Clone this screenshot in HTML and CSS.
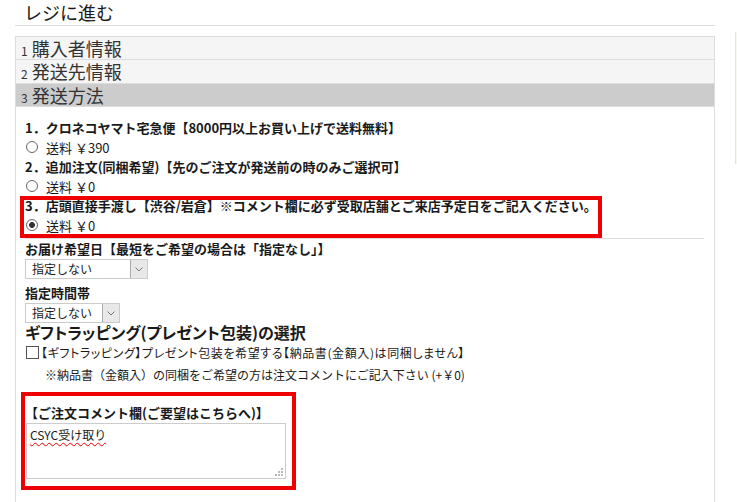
FILE: index.html
```html
<!DOCTYPE html>
<html lang="ja">
  <head>
    <meta charset="UTF-8" />
    <meta name="viewport" content="width=device-width, initial-scale=1.0" />
    <title>レジに進む</title>
    <link rel="stylesheet" href="styles.css">
  </head>
  <body>
    <div class="page">
      <div class="main">
        <h1 class="title">レジに進む</h1>
        <ol class="steps">
          <li class="step"><span class="num">1</span>購入者情報</li>
          <li class="step"><span class="num">2</span>発送先情報</li>
          <li class="step current"><span class="num">3</span>発送方法</li>
        </ol>
        <div class="panel">
          <div class="options">
            <div class="option">
              <div class="option-title">1．クロネコヤマト宅急便【8000円以上お買い上げで送料無料】</div>
              <div class="radio-line"><span class="radio"></span>送料 ￥390</div>
            </div>
            <div class="option">
              <div class="option-title">2．追加注文(同梱希望)【先のご注文が発送前の時のみご選択可】</div>
              <div class="radio-line"><span class="radio"></span>送料 ￥0</div>
            </div>
            <div class="option marked">
              <div class="option-title">3．店頭直接手渡し【渋谷/岩倉】※コメント欄に必ず受取店舗とご来店予定日をご記入ください。</div>
              <div class="radio-line"><span class="radio checked"></span>送料 ￥0</div>
            </div>
          </div>

          <div class="field-label">お届け希望日【最短をご希望の場合は「指定なし」】</div>
          <div class="select wide">
            <span class="select-value">指定しない</span>
            <span class="select-arrow">
              <svg width="8" height="5" viewBox="0 0 8 5"><path d="M0.5 0.5 L4 4 L7.5 0.5" fill="none" stroke="#777" stroke-width="1"/></svg>
            </span>
          </div>

          <div class="field-label time">指定時間帯</div>
          <div class="select narrow">
            <span class="select-value">指定しない</span>
            <span class="select-arrow">
              <svg width="8" height="5" viewBox="0 0 8 5"><path d="M0.5 0.5 L4 4 L7.5 0.5" fill="none" stroke="#777" stroke-width="1"/></svg>
            </span>
          </div>

          <div class="gift-heading">ギフトラッピング(プレゼント包装)の選択</div>
          <div class="gift-check"><span class="checkbox"></span>【ギフトラッピング】プレゼント包装を希望する【納品書(金額入)は同梱しません】</div>
          <div class="note">※納品書（金額入）の同梱をご希望の方は注文コメントにご記入下さい (+￥0)</div>

          <div class="comment">
            <div class="comment-label">【ご注文コメント欄(ご要望はこちらへ)】</div>
            <div class="textarea">
              <span class="typo">CSYC受け取り</span>
              <svg class="grip" width="8" height="8" viewBox="0 0 8 8">
                <rect x="6" y="0" width="2" height="2" fill="#bbb"/>
                <rect x="3" y="3" width="2" height="2" fill="#bbb"/>
                <rect x="6" y="3" width="2" height="2" fill="#bbb"/>
                <rect x="0" y="6" width="2" height="2" fill="#bbb"/>
                <rect x="3" y="6" width="2" height="2" fill="#bbb"/>
                <rect x="6" y="6" width="2" height="2" fill="#bbb"/>
              </svg>
            </div>
          </div>
        </div>
      </div>
      <div class="side"></div>
    </div>
  </body>
</html>
```

FILE: styles.css
```css
body {
  margin: 0;
  font-family: "Noto Sans CJK JP", "Liberation Sans", sans-serif;
  color: #1a1a1a;
  background-color: #fff;
  overflow: hidden;
}
.page {
  display: flex;
  padding-left: 15px;
}
.main {
  width: 700px;
  flex: none;
}
.title {
  margin: 0;
  height: 25px;
  padding-left: 9px;
  border-bottom: 1px solid #ddd;
  font-size: 18px;
  font-weight: normal;
  line-height: 25px;
}
.steps {
  list-style: none;
  margin: 10px 0 0;
  padding: 0;
  border: 1px solid #ddd;
  border-bottom: none;
}
.step {
  height: 22px;
  padding-left: 5px;
  border-bottom: 1px solid #ddd;
  background-color: #f5f5f5;
  color: #333;
  font-size: 18px;
  line-height: 22px;
}
.step:nth-child(2) {
  height: 23px;
  line-height: 23px;
}
.step.current {
  background-color: #ccc;
}
.num {
  font-size: 12px;
  margin-right: 4px;
}
.panel {
  height: 400px;
  padding: 11px 10px 0 9px;
  border-left: 1px solid #ddd;
  border-right: 1px solid #ddd;
}
.options {
  padding-bottom: 3px;
  border-bottom: 1px solid #ddd;
}
.option-title {
  font-size: 13px;
  font-weight: bold;
  line-height: 19px;
}
.radio-line {
  display: flex;
  align-items: center;
  gap: 8px;
  height: 20px;
  padding-left: 1px;
  font-size: 13px;
}
.radio {
  width: 12px;
  height: 12px;
  border: 1px solid #666;
  border-radius: 50%;
  box-sizing: border-box;
  background-color: #fff;
}
.radio.checked {
  background: radial-gradient(circle, #333 0 2.6px, #fff 3.2px);
}
.option.marked {
  position: relative;
}
.option.marked::after {
  content: "";
  position: absolute;
  top: 0;
  left: -5px;
  width: 582px;
  height: 42px;
  border: 4px solid #e00;
  box-sizing: border-box;
}
.field-label {
  font-size: 13px;
  font-weight: bold;
  line-height: 20px;
}
.field-label.time {
  margin-top: 4px;
}
.select {
  display: flex;
  height: 20px;
  border: 1px solid #ccc;
  box-sizing: border-box;
  font-size: 12px;
  line-height: 18px;
}
.select.wide {
  width: 123px;
}
.select.narrow {
  width: 95px;
}
.select-value {
  padding-left: 6px;
}
.select-arrow {
  display: flex;
  align-items: center;
  justify-content: center;
  margin-left: auto;
  width: 16px;
  border-left: 1px solid #aaa;
  background-color: #e8e8e8;
}
.gift-heading {
  font-size: 16px;
  font-weight: bold;
  line-height: 19px;
  font-feature-settings: "palt";
}
.gift-check {
  display: flex;
  align-items: center;
  height: 20px;
  padding-left: 1px;
  font-size: 12px;
  letter-spacing: 0.6px;
  font-feature-settings: "palt";
}
.checkbox {
  width: 13px;
  height: 13px;
  margin-right: 2px;
  border: 1px solid #555;
  box-sizing: border-box;
}
.note {
  margin-top: 3px;
  padding-left: 20px;
  font-size: 12px;
  line-height: 20px;
}
.comment {
  width: 267px;
  margin-top: 11px;
  padding: 7px 0 7px 1px;
  box-sizing: border-box;
  outline: 4px solid #e00;
}
.comment-label {
  margin-left: -1px;
  font-size: 13px;
  font-weight: bold;
  line-height: 20px;
}
.textarea {
  position: relative;
  width: 260px;
  height: 56px;
  padding: 2px 3px;
  border: 1px solid #ccc;
  box-sizing: border-box;
  font-size: 12px;
  line-height: 17px;
}
.typo {
  text-decoration: underline wavy #e00;
  text-decoration-thickness: 1px;
  text-underline-offset: 2px;
}
.grip {
  position: absolute;
  right: 2px;
  bottom: 2px;
}
.side {
  flex: none;
  width: 200px;
  height: 132px;
  margin-left: 20px;
  margin-top: 32px;
  border-left: 1px solid #e3e3e3;
  background-color: #f7f9ee;
}
```
